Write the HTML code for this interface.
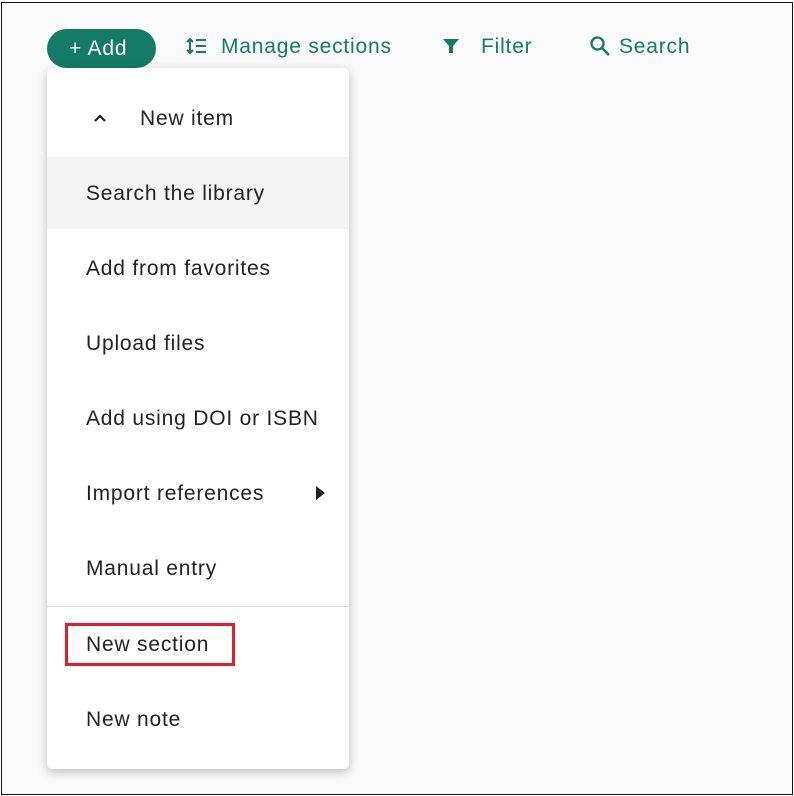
<!DOCTYPE html>
<html><head><style>
*{box-sizing:border-box;margin:0;padding:0}
body{width:794px;height:796px;background:#fff;font-family:"Liberation Sans",sans-serif;position:relative;overflow:hidden}
.frame{position:absolute;left:1px;top:2px;width:792px;height:793px;border:1.5px solid #111;background:#fafafa}
.btn{position:absolute;left:47px;top:29px;width:109px;height:39px;border-radius:20px;background:#137b67;color:#fff;font-size:21px;letter-spacing:0.8px;line-height:39px;padding-left:22px}
.tb{position:absolute;top:35px;color:#137b67;font-size:21px;letter-spacing:0.8px;line-height:24px;white-space:nowrap}
.menu{position:absolute;left:47px;top:68px;width:302px;height:701px;background:#fff;border-radius:5px;box-shadow:0 3px 10px rgba(0,0,0,.25)}
.it{position:absolute;left:39px;font-size:21px;letter-spacing:0.8px;color:#222;line-height:24px;white-space:nowrap}
.hl{position:absolute;left:0;top:89px;width:302px;height:72px;background:#f4f4f4}
.sep{position:absolute;left:0;top:538px;width:302px;height:1px;background:#ddd}
.red{position:absolute;left:65px;top:623px;width:170px;height:43px;border:3px solid #e0202a}
</style></head><body>
<div class="frame"></div>
<div class="btn">+ Add</div>
<div class="tb" style="left:186px"><svg width="22" height="20" viewBox="0 0 22 20" style="vertical-align:-3px;margin-right:13px"><path d="M4 3v14M1 6l3-3 3 3M1 14l3 3 3-3M10 4h10M10 10h10M10 16h10" stroke="#137b67" stroke-width="2" fill="none"/></svg>Manage sections</div>
<div class="tb" style="left:442px"><svg width="18" height="18" viewBox="0 0 18 18" style="vertical-align:-2px;margin-right:21px"><path d="M1 2h16l-6 7v7h-4v-7z" fill="#137b67"/></svg>Filter</div>
<div class="tb" style="left:589px"><svg width="22" height="22" viewBox="0 0 22 22" style="vertical-align:-4px;margin-right:8px"><circle cx="8.5" cy="8.5" r="6" stroke="#137b67" stroke-width="2.3" fill="none"/><path d="M13 13l7 7" stroke="#137b67" stroke-width="2.5"/></svg>Search</div>
<div class="menu">
<div class="hl"></div>
<svg style="position:absolute;left:46px;top:45px" width="14" height="10" viewBox="0 0 14 10"><path d="M2 8l5-5 5 5" stroke="#222" stroke-width="2.2" fill="none"/></svg>
<div class="it" style="left:93px;top:39px">New item</div>
<div class="it" style="top:114px">Search the library</div>
<div class="it" style="top:189px">Add from favorites</div>
<div class="it" style="top:264px">Upload files</div>
<div class="it" style="top:339px">Add using DOI or ISBN</div>
<div class="it" style="top:414px">Import references</div>
<svg style="position:absolute;left:269px;top:418px" width="9" height="14"><path d="M0 0l9 7-9 7z" fill="#222"/></svg>
<div class="it" style="top:489px">Manual entry</div>
<div class="sep"></div>
<div class="it" style="top:565px">New section</div>
<div class="it" style="top:640px">New note</div>
</div>
<div class="red"></div>
</body></html>
